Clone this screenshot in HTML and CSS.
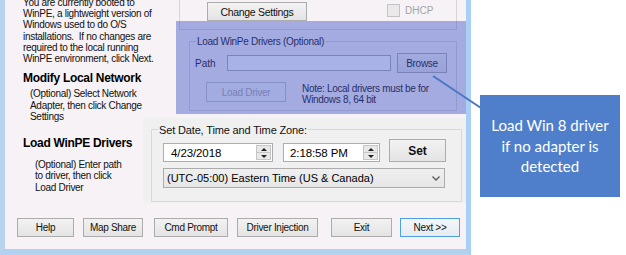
FILE: index.html
```html
<!DOCTYPE html>
<html>
<head>
<meta charset="utf-8">
<link rel="stylesheet" href="styles.css">
</head>
<body>
<div class="screen">
  <div class="window">
    <div class="main">
      <div class="left">
        <p class="intro">You are currently booted to<br>WinPE, a lightweight version of<br>Windows used to do O/S<br>installations.&nbsp; If no changes are<br>required to the local running<br>WinPE environment, click Next.</p>
        <h2 class="heading h-net">Modify Local Network</h2>
        <p class="desc desc-net">(Optional) Select Network<br>Adapter, then click Change<br>Settings</p>
        <h2 class="heading h-drv">Load WinPE Drivers</h2>
        <p class="desc desc-drv">(Optional) Enter path<br>to driver, then click<br>Load Driver</p>
      </div>
      <div class="right">
        <div class="net-area">
          <div class="net-group">
            <div class="btn btn-change">Change Settings</div>
            <div class="check"><span class="box"></span><span class="check-label">DHCP</span></div>
          </div>
        </div>
        <div class="drv-area">
          <div class="group drv-group">
            <div class="group-label drv-label">Load WinPe Drivers (Optional)</div>
            <div class="path-row">
              <span class="path-label">Path</span>
              <div class="textbox"></div>
              <div class="btn btn-browse">Browse</div>
            </div>
            <div class="load-row">
              <div class="btn btn-disabled btn-load">Load Driver</div>
              <p class="note">Note: Local drivers must be for<br>Windows 8, 64 bit</p>
            </div>
          </div>
        </div>
        <div class="date-area">
          <div class="group date-group">
            <div class="group-label date-label">Set Date, Time and Time Zone:</div>
            <div class="dt-row">
              <div class="picker picker-date">
                <span class="picker-text">4/23/2018</span>
                <span class="spin"><span class="spin-half"><span class="tri-up"></span></span><span class="spin-half spin-bottom"><span class="tri-down"></span></span></span>
              </div>
              <div class="picker picker-time">
                <span class="picker-text">2:18:58 PM</span>
                <span class="spin"><span class="spin-half"><span class="tri-up"></span></span><span class="spin-half spin-bottom"><span class="tri-down"></span></span></span>
              </div>
              <div class="btn btn-set">Set</div>
            </div>
            <div class="combo">
              <span class="combo-text">(UTC-05:00) Eastern Time (US &amp; Canada)</span>
              <svg class="chevron" width="8" height="5" viewBox="0 0 8 5"><polyline points="0.5,0.5 4,4 7.5,0.5" fill="none" stroke="#5a5a5a" stroke-width="1.3"/></svg>
            </div>
          </div>
        </div>
      </div>
    </div>
    <div class="buttons">
      <div class="btn b-help">Help</div>
      <div class="btn b-map">Map Share</div>
      <div class="btn b-cmd">Cmd Prompt</div>
      <div class="btn b-drv">Driver Injection</div>
      <div class="btn b-exit">Exit</div>
      <div class="btn b-next">Next &gt;&gt;</div>
    </div>
  </div>
  <div class="overlay"></div>
  <svg class="connector" width="626" height="255" viewBox="0 0 626 255"><line x1="433" y1="76" x2="481" y2="108" stroke="#4a76c4" stroke-width="2"/></svg>
  <div class="callout"><p class="callout-text">Load Win 8 driver<br>if no adapter is<br>detected</p></div>
</div>
</body>
</html>
```
FILE: styles.css
```css
* { box-sizing: border-box; }
body {
  margin: 0;
  background: #ffffff;
  font-family: "Liberation Sans", Arial, sans-serif;
  font-size: 10px;
  color: #111;
}
p, h2 { margin: 0; }
.screen {
  position: relative;
  width: 626px;
  height: 255px;
  overflow: hidden;
  background: #fff;
}
.window {
  width: 471px;
  height: 255px;
  border-left: 5px solid #b7d3ef;
  border-right: 5px solid #aacff4;
  border-bottom: 6px solid #b2d2f1;
  background: #f6f2f5;
  display: flex;
  flex-direction: column;
}
.main {
  display: grid;
  grid-template-columns: 138px 323px;
  height: 203px;
}
.left {
  padding-left: 18px;
  white-space: nowrap;
  letter-spacing: -0.3px;
}
.intro { margin-top: -3px; line-height: 11.2px; }
.heading {
  font-size: 12px;
  font-weight: bold;
  line-height: 14px;
  letter-spacing: -0.3px;
  color: #000;
}
.h-net { margin-top: 7px; }
.h-drv { margin-top: 14px; }
.desc { line-height: 11.3px; }
.desc-net { margin-top: 3px; padding-left: 7px; }
.desc-drv { margin-top: 9px; padding-left: 12px; }

.right { display: flex; flex-direction: column; }
.net-area { height: 33px; }
.net-group {
  margin-left: 36px;
  width: 278px;
  height: 30px;
  border: 1px solid #d6d6d6;
  border-top: none;
  padding: 2px 0 0 27px;
  display: flex;
  align-items: flex-start;
}
.btn {
  height: 19px;
  border: 1px solid #acacac;
  background: linear-gradient(#f2f2f2, #e4e4e4);
  display: flex;
  align-items: center;
  justify-content: center;
  letter-spacing: -0.3px;
  color: #111;
  white-space: nowrap;
}
.btn-change { width: 100px; font-size: 10.5px; }
.check { margin-left: 80px; margin-top: 2px; display: flex; align-items: center; }
.box {
  width: 13px;
  height: 13px;
  border: 1px solid #c4c4c4;
  background: #e9e9e9;
}
.check-label { margin-left: 5px; color: #a4a4a4; line-height: 13px; }

.drv-area { height: 85px; padding-top: 8px; }
.group { border: 1px solid #d6d6d6; }
.drv-group {
  margin-left: 46px;
  width: 268px;
  height: 70px;
  padding-left: 5px;
}
.group-label {
  width: fit-content;
  margin-top: -7px;
  padding: 0 1px;
  white-space: nowrap;
  letter-spacing: -0.3px;
}
.drv-label { line-height: 13px; margin-left: 1px; background: #f6f2f5; }
.path-row { margin-top: 5px; height: 20px; display: flex; align-items: center; }
.path-label { width: 32px; }
.textbox {
  width: 164px;
  height: 16px;
  border: 1px solid #abadb3;
  background: #fff;
}
.btn-browse { margin-left: 6px; width: 50px; height: 20px; }
.load-row { margin-top: 9px; display: flex; align-items: flex-start; }
.btn-disabled {
  border-color: #c4c4c4;
  background: #f4f4f4;
  color: #a8a8a8;
}
.btn-load { margin-left: 11px; width: 80px; height: 20px; }
.note { margin-left: 16px; margin-top: 1px; line-height: 11px; letter-spacing: -0.3px; white-space: nowrap; }

.date-area { height: 85px; padding-top: 11px; background: #f0f0f0; }
.date-group {
  margin-left: 8px;
  width: 311px;
  padding: 0 0 13px 11px;
  border-color: #d9d9d9;
}
.date-label {
  margin-left: -5px;
  line-height: 14px;
  font-size: 11px;
  letter-spacing: -0.15px;
  background: #f0f0f0;
}
.dt-row { margin-top: 2px; height: 23px; display: flex; align-items: flex-end; }
.picker {
  height: 19px;
  border: 1px solid #abadb3;
  background: #fff;
  display: flex;
  align-items: center;
  justify-content: space-between;
  padding-right: 1px;
}
.picker-text { font-size: 11.5px; letter-spacing: -0.1px; color: #000; }
.picker-date { width: 110px; padding-left: 7px; }
.picker-time { width: 97px; margin-left: 10px; padding-left: 6px; }
.spin {
  width: 15px;
  height: 15px;
  border: 1px solid #c6c6c6;
  background: #e8e8e8;
  display: flex;
  flex-direction: column;
}
.spin-half { flex: 1; display: flex; align-items: center; justify-content: center; }
.spin-bottom { border-top: 1px solid #c6c6c6; }
.tri-up {
  width: 0; height: 0;
  border-left: 3px solid transparent;
  border-right: 3px solid transparent;
  border-bottom: 3px solid #222;
}
.tri-down {
  width: 0; height: 0;
  border-left: 3px solid transparent;
  border-right: 3px solid transparent;
  border-top: 3px solid #222;
}
.btn-set { margin-left: 9px; width: 57px; height: 23px; font-size: 12px; font-weight: bold; letter-spacing: 0; }
.combo {
  margin-top: 6px;
  width: 282px;
  height: 20px;
  border: 1px solid #acacac;
  background: linear-gradient(#efefef, #e6e6e6);
  display: flex;
  align-items: center;
  justify-content: space-between;
  padding: 0 4px 0 3px;
}
.combo-text { font-size: 11px; color: #000; white-space: nowrap; }

.buttons {
  display: flex;
  gap: 9px;
  padding: 15px 0 0 12px;
}
.b-help { width: 57px; }
.b-map { width: 60px; }
.b-cmd { width: 74px; margin-left: 2px; }
.b-drv { width: 81px; }
.b-exit { width: 61px; margin-left: 4px; }
.b-next { width: 60px; margin-left: -1px; border-color: #4f9fe3; background: linear-gradient(#f3f6fa, #e7ecf2); }

.overlay {
  position: absolute;
  left: 176px;
  top: 21px;
  width: 290px;
  height: 93px;
  background: rgba(60, 80, 200, 0.44);
}
.connector { position: absolute; left: 0; top: 0; }
.callout {
  position: absolute;
  left: 480px;
  top: 95px;
  width: 140px;
  height: 102px;
  background: #4f7fcb;
  display: flex;
  align-items: center;
  justify-content: center;
}
.callout-text {
  color: #fff;
  text-align: center;
  font-family: Lato, "Liberation Sans", sans-serif;
  font-size: 15px;
  line-height: 20.5px;
}
```
